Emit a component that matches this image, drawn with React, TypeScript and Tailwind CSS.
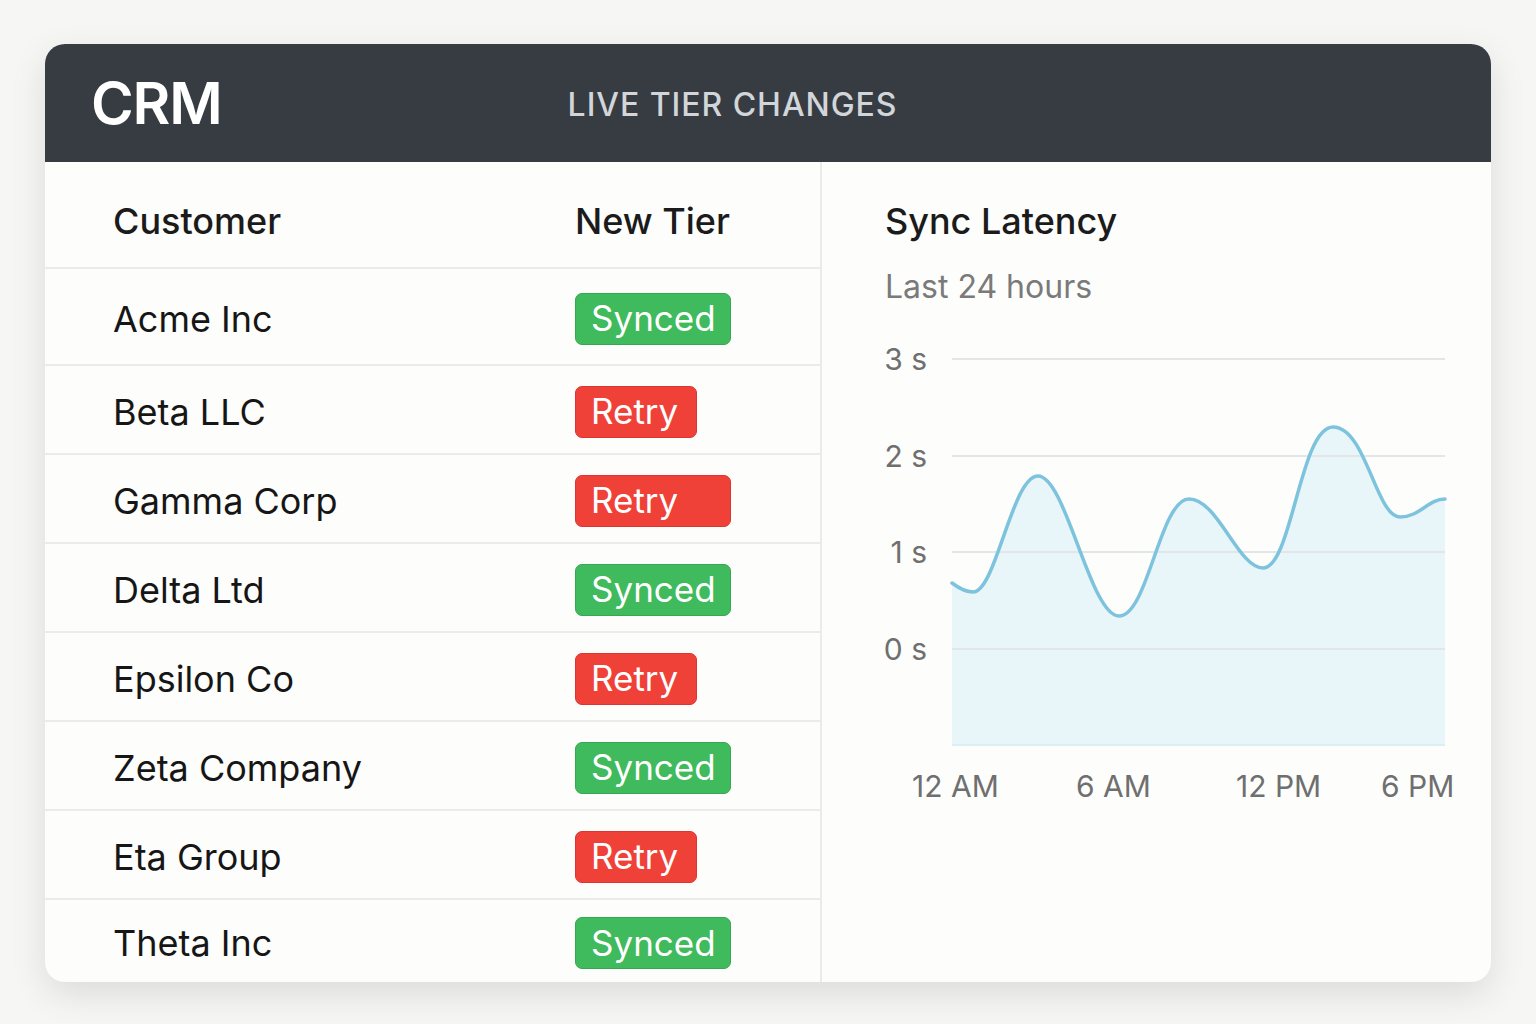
import React from "react";

type Row = { name: string; status: "Synced" | "Retry"; wide?: boolean };

const rows: Row[] = [
  { name: "Acme Inc", status: "Synced" },
  { name: "Beta LLC", status: "Retry" },
  { name: "Gamma Corp", status: "Retry", wide: true },
  { name: "Delta Ltd", status: "Synced" },
  { name: "Epsilon Co", status: "Retry" },
  { name: "Zeta Company", status: "Synced" },
  { name: "Eta Group", status: "Retry" },
  { name: "Theta Inc", status: "Synced" },
];

const curve =
  "M952 583 C960 589, 966 592, 973 592 C996 592, 1012 476, 1038 476 C1066 476, 1090 616, 1119 616 C1148 616, 1160 499, 1189 499 C1218 499, 1238 568, 1263 568 C1292 568, 1300 427, 1333 427 C1366 427, 1376 517, 1400 517 C1420 517, 1428 499, 1445 499";

const Badge = ({ status, wide }: { status: Row["status"]; wide?: boolean }) => {
  const green = status === "Synced";
  return (
    <span
      className={`inline-flex h-[52px] items-center rounded-[7px] border pl-[15px] text-[35px] leading-none text-white ${
        green ? "border-[#35a851] bg-[#3fba5c] w-[156px]" : "border-[#dd3530] bg-[#ef4138]"
      } ${!green && wide ? "w-[156px]" : ""} ${!green && !wide ? "w-[122px]" : ""}`}
    >
      {status}
    </span>
  );
};

const LatencyChart = () => (
  <svg
    width={600}
    height={520}
    viewBox="870 307 600 520"
    className="-ml-[15px] block"
    style={{ fontFamily: "Inter, 'Liberation Sans', sans-serif" }}
  >
    <path d={`${curve} L1445 745 L952 745 Z`} fill="#e8f6f9" />
    {[359, 456, 552, 649].map((y) => (
      <line key={y} x1={952} x2={1445} y1={y} y2={y} stroke="#e2e6e7" strokeWidth={2} />
    ))}
    <line x1={952} x2={1445} y1={745} y2={745} stroke="#dceff4" strokeWidth={2} />
    <path d={curve} fill="none" stroke="#7ec3dd" strokeWidth={3.5} strokeLinecap="round" />
    {[
      ["3 s", 370],
      ["2 s", 467],
      ["1 s", 563],
      ["0 s", 660],
    ].map(([t, y]) => (
      <text key={t} x={927} y={y as number} textAnchor="end" fontSize={30} fill="#6f6f6f">
        {t}
      </text>
    ))}
    {[
      ["12 AM", 912],
      ["6 AM", 1076],
      ["12 PM", 1236],
      ["6 PM", 1381],
    ].map(([t, x]) => (
      <text key={t} x={x as number} y={797} fontSize={30} fill="#6f6f6f">
        {t}
      </text>
    ))}
  </svg>
);

const App = () => {
  return (
    <div
      className="min-h-[1024px] w-[1536px] bg-[#f6f6f4] pt-[44px] pl-[45px]"
      style={{ fontFamily: "Inter, 'Liberation Sans', sans-serif" }}
    >
      <div className="w-[1446px] overflow-hidden rounded-[20px] bg-[#fdfdfc] shadow-[0_12px_36px_rgba(0,0,0,0.11)]">
        {/* Header */}
        <div className="flex h-[118px] items-center bg-[#363c42] pl-[46px]">
          <span className="text-[58px] font-semibold tracking-[-0.02em] text-white">CRM</span>
          <span className="ml-[346px] pt-[4px] text-[32px] font-medium tracking-[0.03em] text-[#d2d6da]">
            LIVE TIER CHANGES
          </span>
        </div>

        <div className="flex">
          {/* Table */}
          <div className="w-[777px] border-r-2 border-[#ebebea]">
            <div className="flex h-[107px] items-center border-b-2 border-[#ebebea] pl-[68px] pt-[12px] text-[36px] font-medium text-[#1b1b1b]">
              <span className="w-[462px]">Customer</span>
              <span>New Tier</span>
            </div>
            {rows.map((r, i) => (
              <div
                key={r.name}
                className={`flex items-center pl-[68px] pt-[4px] text-[36px] text-[#161616] ${
                  i === 0 ? "h-[97px]" : i === rows.length - 1 ? "h-[82px]" : "h-[89px]"
                } ${i < rows.length - 1 ? "border-b-2 border-[#ebebea]" : ""}`}
              >
                <span className="w-[462px]">{r.name}</span>
                <Badge status={r.status} wide={r.wide} />
              </div>
            ))}
          </div>

          {/* Chart panel */}
          <div className="flex flex-1 flex-col pl-[63px] pt-[37px]">
            <h2 className="text-[36px] font-medium leading-[44px] text-[#1b1b1b]">Sync Latency</h2>
            <p className="mt-[24px] text-[32px] leading-[40px] text-[#7a7a7a]">Last 24 hours</p>
            <LatencyChart />
          </div>
        </div>
      </div>
    </div>
  );
};

export default App;
